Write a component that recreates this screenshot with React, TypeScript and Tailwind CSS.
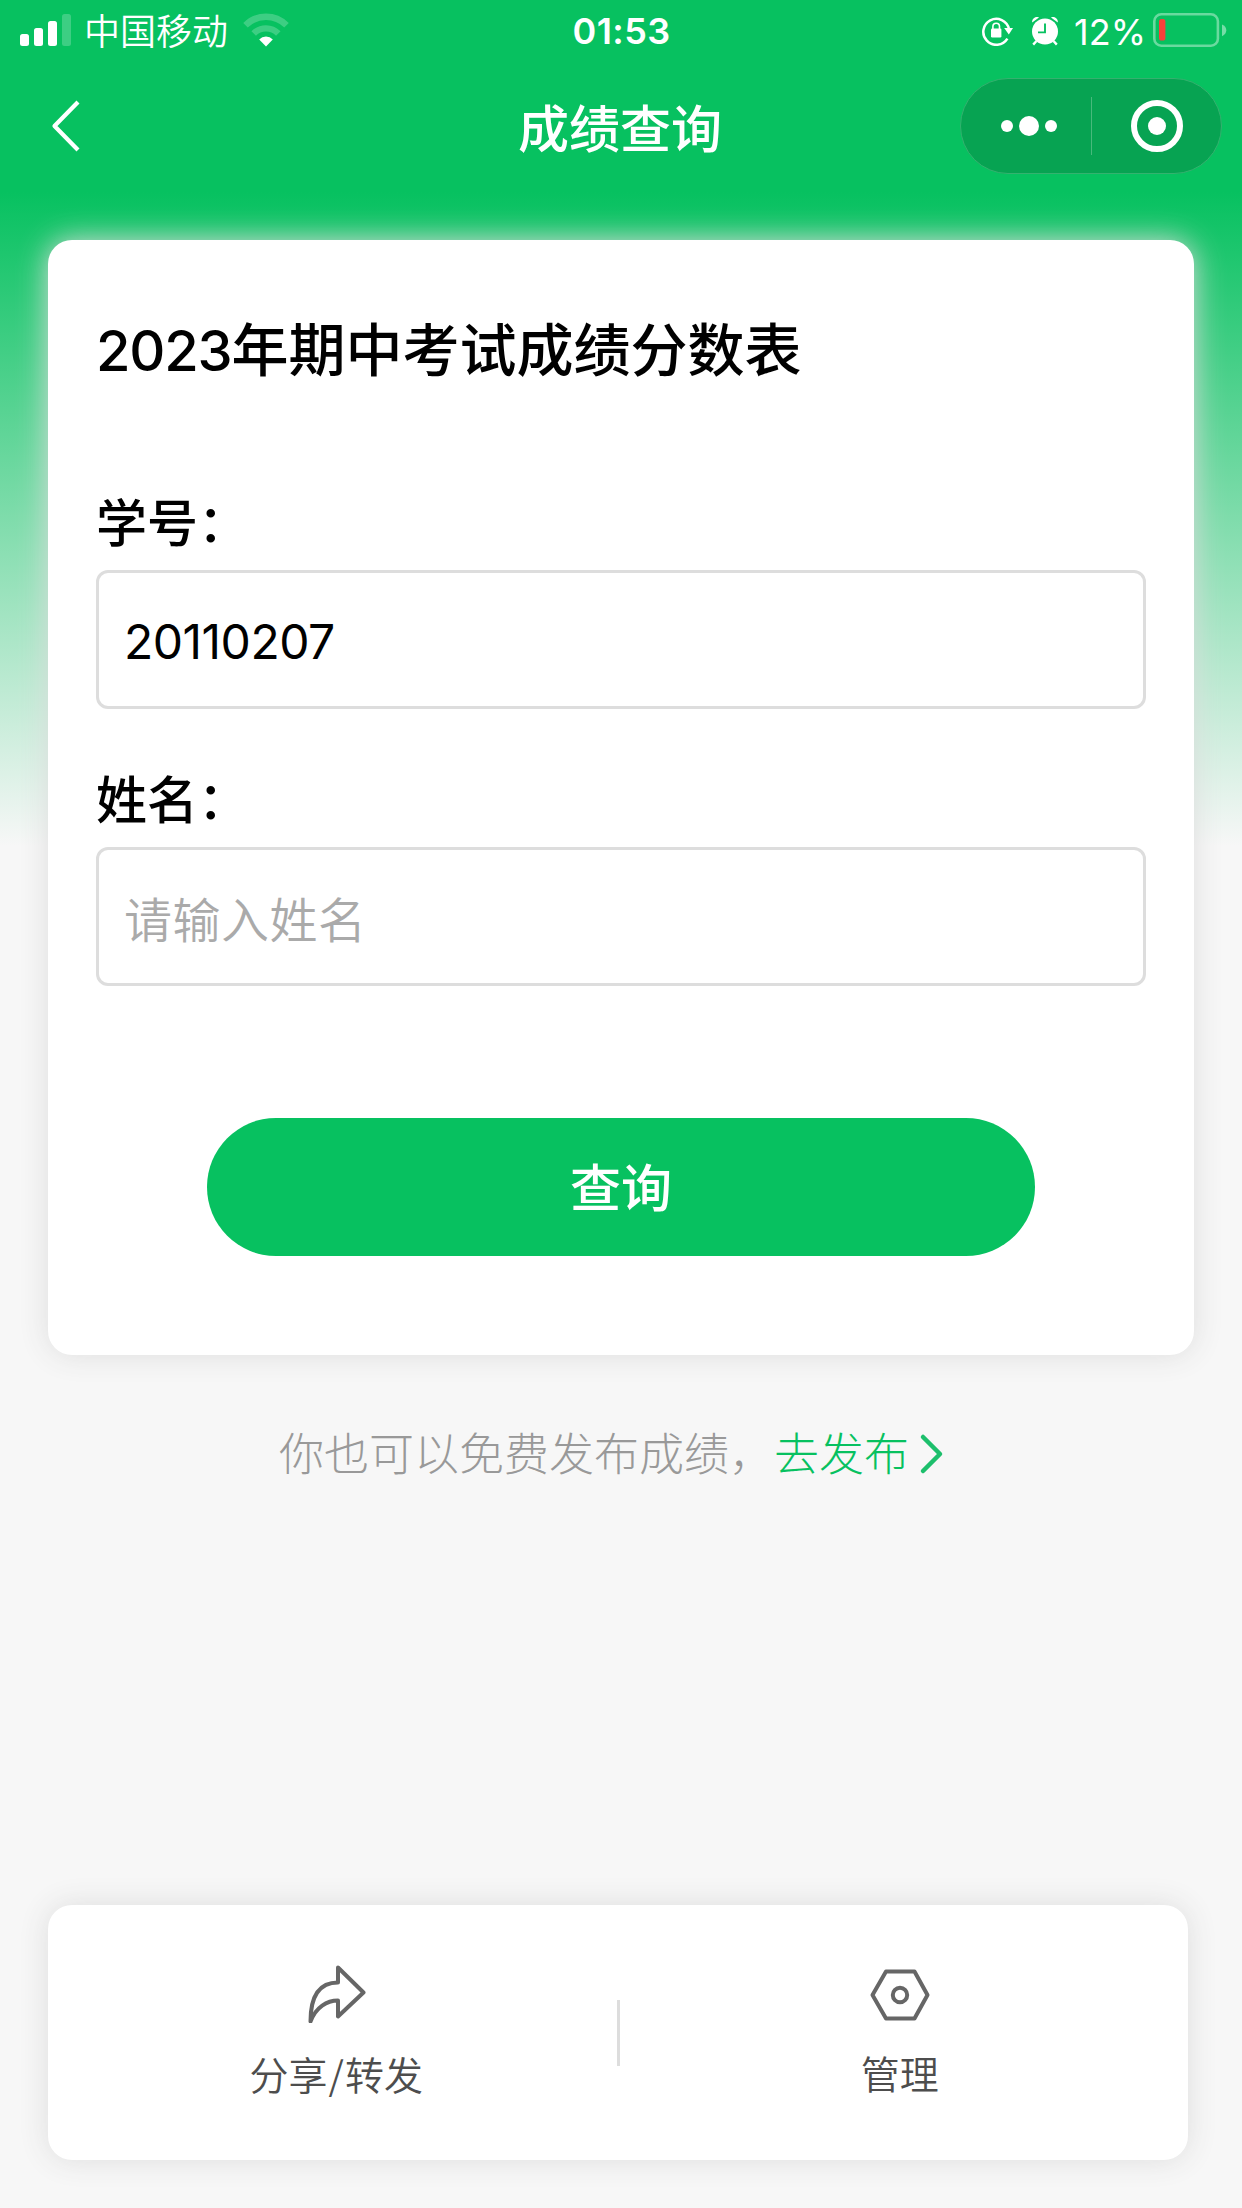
import { useState } from 'react';

interface FieldProps {
  label: string;
  value: string;
  placeholder: string;
  onChange: (value: string) => void;
}

function SignalIcon() {
  return (
    <svg className="h-8 w-[51px]" viewBox="0 0 51 32" fill="#fff">
      <rect x="0" y="20" width="9" height="12" rx="2.5" />
      <rect x="14" y="14" width="9" height="18" rx="2.5" />
      <rect x="28" y="7" width="9" height="25" rx="2.5" />
      <rect x="42" y="0" width="9" height="32" rx="2.5" opacity="0.22" />
    </svg>
  );
}

function WifiIcon() {
  return (
    <svg className="ml-[15px] h-[34px] w-[46px]" viewBox="0 0 46 34" fill="none">
      <path d="M2.5 12.3a29 29 0 0 1 41 0" stroke="#fff" strokeOpacity="0.22" strokeWidth="6.4" />
      <path d="M10.7 20.5a17.4 17.4 0 0 1 24.6 0" stroke="#fff" strokeOpacity="0.22" strokeWidth="6.4" />
      <path d="M16.2 26.4a9.6 9.6 0 0 1 13.6 0L23 33.4z" fill="#fff" />
    </svg>
  );
}

function RotationLockIcon() {
  return (
    <svg className="h-[30px] w-8" viewBox="0 0 32 30" fill="none">
      <path d="M25.4 22.6A13 13 0 1 1 27 13" stroke="#fff" strokeWidth="2.5" />
      <path d="M22.2 12H31l-4.2 6.6z" fill="#fff" />
      <rect x="9" y="12.5" width="10.4" height="9" rx="1.2" fill="#fff" />
      <path d="M10.9 13V10.6a3.3 3.3 0 0 1 6.6 0V13" stroke="#fff" strokeWidth="1.6" />
    </svg>
  );
}

function AlarmIcon() {
  return (
    <svg className="h-[30px] w-7" viewBox="0 0 28 30" fill="none">
      <circle cx="14" cy="15.5" r="13" fill="#fff" />
      <path d="M1.2 6.6C.6 3 4.2 0 8 1.4zM26.8 6.6C27.4 3 23.8 0 20 1.4z" fill="#fff" />
      <path d="M5.5 25l-3.3 3.6M22.5 25l3.3 3.6" stroke="#fff" strokeWidth="2.4" />
      <path d="M14 7.4v9H7" stroke="#07c160" strokeWidth="1.9" />
    </svg>
  );
}

function BatteryIcon() {
  return (
    <svg className="h-[34px] w-[74px]" viewBox="0 0 74 34" fill="none">
      <rect x="1.3" y="1.3" width="63.6" height="31.4" rx="7" stroke="#fff" strokeOpacity="0.4" strokeWidth="2.6" />
      <rect x="6" y="6" width="6.4" height="21.5" rx="2.6" fill="#f9403a" />
      <path d="M69 11.5c2.8 1.2 4.3 3.2 4.3 5.8S71.8 22 69 23.2z" fill="#fff" fillOpacity="0.45" />
    </svg>
  );
}

function StatusBar() {
  return (
    <div className="grid h-[60px] grid-cols-3 items-center pr-[15px] pl-5 text-[36px] leading-none text-white">
      <div className="flex items-center">
        <SignalIcon />
        <span className="ml-[13px] pt-1 font-[350]">中国移动</span>
        <WifiIcon />
      </div>
      <span className="-ml-1 pt-0.5 text-center text-[36px] font-semibold tracking-[0.4px]">01:53</span>
      <div className="flex items-center justify-end">
        <span className="pt-0.5">
          <RotationLockIcon />
        </span>
        <span className="ml-[17px] pt-0.5">
          <AlarmIcon />
        </span>
        <span className="mr-[7px] ml-[15px] pt-[3px] text-[36px] font-[380]">12%</span>
        <BatteryIcon />
      </div>
    </div>
  );
}

function NavBar() {
  return (
    <div className="grid h-[132px] grid-cols-3 items-center pr-5 pl-[50px] text-white">
      <button type="button" className="justify-self-start" aria-label="返回">
        <svg className="h-[54px] w-8" viewBox="0 0 32 54" fill="none">
          <path d="M28 3L4.5 27 28 51" stroke="#fff" strokeWidth="4.2" strokeLinejoin="round" />
        </svg>
      </button>
      <h1 className="-ml-8 pt-1.5 text-center text-[51px] leading-none font-medium whitespace-nowrap">成绩查询</h1>
      <div className="flex h-24 w-[262px] items-center justify-self-end rounded-full border border-[#34b26f] bg-[#07a352]">
        <div className="flex w-[130px] items-center justify-center gap-1.5 pl-1.5">
          <span className="size-3 rounded-full bg-white" />
          <span className="size-5 rounded-full bg-white" />
          <span className="size-3 rounded-full bg-white" />
        </div>
        <span className="h-[58px] w-px bg-[#48b97c]" />
        <div className="flex flex-1 justify-center pl-0.5">
          <span className="flex size-[52px] items-center justify-center rounded-full border-[6px] border-white">
            <span className="size-[18px] rounded-full bg-white" />
          </span>
        </div>
      </div>
    </div>
  );
}

function Field({ label, value, placeholder, onChange }: FieldProps) {
  return (
    <label className="block">
      <span className="block h-[71px] text-[51px] leading-[50px] font-medium">{label}</span>
      <input
        className="block h-[139px] w-full rounded-xl border-3 border-[#ddd] px-[25px] pt-1 text-[48px] tracking-[-0.5px] text-black outline-none placeholder:font-[350] placeholder:tracking-[0.5px] placeholder:text-[#aaa] placeholder-shown:pt-[7px]"
        value={value}
        placeholder={placeholder}
        onChange={(e) => onChange(e.target.value)}
      />
    </label>
  );
}

function ShareIcon() {
  return (
    <svg className="size-[60px]" viewBox="0 0 60 60" fill="none" stroke="#666" strokeWidth="4" strokeLinejoin="round">
      <path d="M32 4.5L57.5 29.5 32 53.5V37.5C21 37.5 10 44 4.5 58.5 4.5 34 12.5 19.5 32 19.5z" />
    </svg>
  );
}

function ManageIcon() {
  return (
    <svg className="size-[60px]" viewBox="0 0 60 60" fill="none" stroke="#666" strokeWidth="4" strokeLinejoin="round">
      <path d="M16 7.5H44.5L57.5 31 44.5 54.5H16L2.5 31z" />
      <circle cx="30" cy="31" r="7.2" />
    </svg>
  );
}

export default function App() {
  const [studentId, setStudentId] = useState('20110207');
  const [name, setName] = useState('');

  return (
    <div className="flex h-[2208px] w-[1242px] flex-col bg-[#f7f7f7] bg-[linear-gradient(to_bottom,#07c160_0,#07c160_192px,#f7f7f7_846px)] font-['Inter','Noto_Sans_CJK_SC',sans-serif] text-black">
      <header>
        <StatusBar />
        <NavBar />
      </header>

      <main className="mx-12 mt-12 h-[1115px] rounded-3xl bg-white px-12 pt-[77px] shadow-[0_0_30px_#ddd]">
        <h2 className="h-[182px] text-[57px] leading-[68px] font-medium">
          <span className="text-[56px] tracking-[-1.2px]">2023</span>年期中考试成绩分数表
        </h2>
        <div className="flex flex-col gap-[67px]">
          <Field label="学号：" value={studentId} placeholder="请输入学号" onChange={setStudentId} />
          <Field label="姓名：" value={name} placeholder="请输入姓名" onChange={setName} />
        </div>
        <button
          type="button"
          className="mx-auto mt-[132px] block h-[138px] w-[828px] rounded-full bg-[#07c160] pt-1 text-[51px] font-medium text-white"
        >
          查询
        </button>
      </main>

      <p className="mt-[69px] flex h-[60px] items-center justify-center text-[45px] leading-none font-light text-[#999]">
        你也可以免费发布成绩，
        <a className="flex items-center text-[#07c160]" href="#publish">
          去发布
          <svg className="h-12 w-[54px]" viewBox="0 0 54 48" fill="none">
            <path d="M14 7l17 17-17 17" stroke="#1dbf6c" strokeWidth="4.5" strokeLinecap="round" strokeLinejoin="round" />
          </svg>
        </a>
      </p>

      <footer className="mt-auto mb-12 ml-12 flex h-[255px] w-[1140px] items-center rounded-3xl bg-white px-2 text-[39px] leading-none font-[350] text-[#4d4d4d] shadow-[0_0_30px_#ddd]">
        <button type="button" className="flex flex-1 flex-col items-center gap-[31px] pb-[7px]">
          <ShareIcon />
          <span>
            分享<span className="mx-px font-['Noto_Sans_CJK_SC',sans-serif]">/</span>转发
          </span>
        </button>
        <span className="h-[66px] w-[3px] bg-[#ddd]" />
        <button type="button" className="flex flex-1 flex-col items-center gap-[31px] pb-[7px]">
          <ManageIcon />
          管理
        </button>
      </footer>
    </div>
  );
}
